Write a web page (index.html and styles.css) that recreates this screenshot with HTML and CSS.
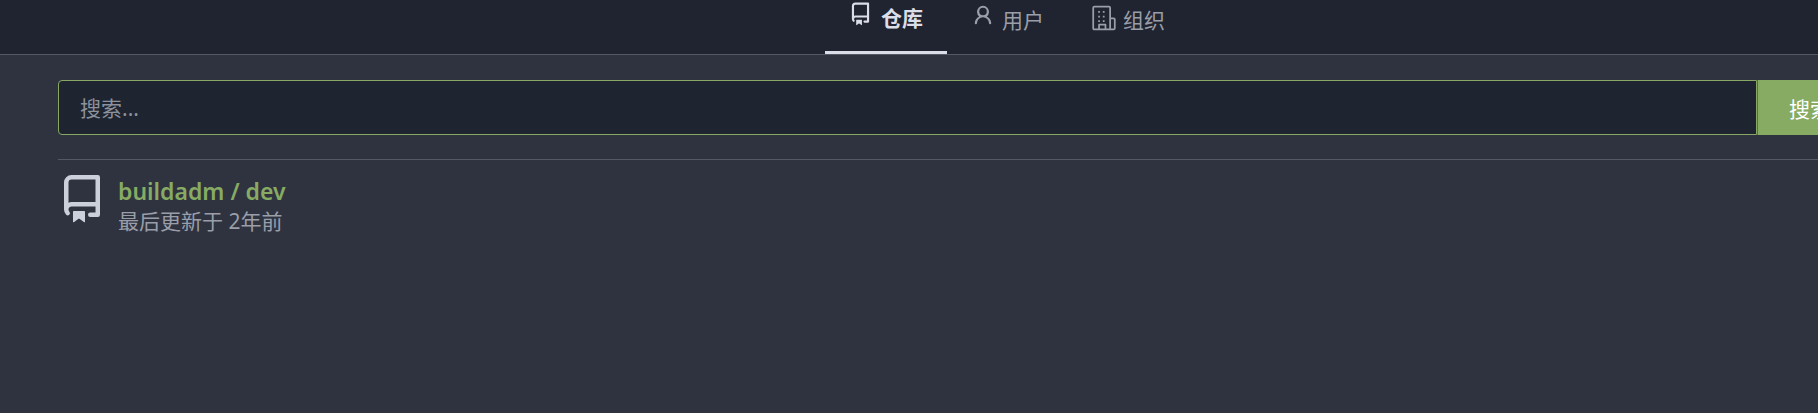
FILE: index.html
```html
<!DOCTYPE html>
<html lang="zh-CN">
<head>
    <meta charset="UTF-8">
    <title>探索</title>
    <link rel="stylesheet" href="styles.css">
</head>
<body>
    <div class="tabs">
        <a class="tab active">
            <svg class="tab-icon" viewBox="0 0 16 16"><path fill-rule="evenodd" d="M2 2.5A2.5 2.5 0 0 1 4.5 0h8.75a.75.75 0 0 1 .75.75v12.5a.75.75 0 0 1-.75.75h-2.5a.75.75 0 0 1 0-1.5h1.75v-2h-8a1 1 0 0 0-.71 1.71.75.75 0 0 1-1.07 1.05A2.5 2.5 0 0 1 2 11.5v-9zm10.5-1h-8a1 1 0 0 0-1 1v6.71A2.5 2.5 0 0 1 4.5 9h8V1.5zM5 12.25a.25.25 0 0 1 .25-.25h3.5a.25.25 0 0 1 .25.25v3.25a.25.25 0 0 1-.4.2l-1.45-1.09a.25.25 0 0 0-.3 0L5.4 15.7a.25.25 0 0 1-.4-.2v-3.25z"/></svg>
            仓库
        </a>
        <a class="tab">
            <svg class="tab-icon" viewBox="0 0 16 16"><path fill-rule="evenodd" d="M10.5 5a2.5 2.5 0 1 1-5 0 2.5 2.5 0 0 1 5 0zm.06 3.28a4 4 0 1 0-5.12 0 5.5 5.5 0 0 0-2.94 4.47.75.75 0 1 0 1.5.1 4 4 0 0 1 8 0 .75.75 0 1 0 1.5-.1 5.5 5.5 0 0 0-2.94-4.47z"/></svg>
            用户
        </a>
        <a class="tab org">
            <svg class="tab-icon wide" viewBox="0 0 24 24"><path fill-rule="evenodd" d="M3.75 1.5A1.75 1.75 0 0 0 2 3.25v17.5c0 .97.78 1.75 1.75 1.75h16.5A1.75 1.75 0 0 0 22 20.75v-7.5A1.75 1.75 0 0 0 20.25 11.5H18V3.25a1.75 1.75 0 0 0-1.75-1.75h-12.5zM16.5 3.25v17.75H14v-3.25a.75.75 0 0 0-.75-.75h-5.5a.75.75 0 0 0-.75.75V21H3.75a.25.25 0 0 1-.25-.25V3.25A.25.25 0 0 1 3.75 3h12.5a.25.25 0 0 1 .25.25zM18 13h2.25a.25.25 0 0 1 .25.25v7.5a.25.25 0 0 1-.25.25H18v-8zM8.5 21v-2.5h4V21h-4zM7 6h1.5v1.5H7V6zm4 0h1.5v1.5H11V6zM7 10h1.5v1.5H7V10zm4 0h1.5v1.5H11V10zM7 14h1.5v1.5H7V14zm4 0h1.5v1.5H11V14z"/></svg>
            组织
        </a>
    </div>

    <div class="content">
        <form class="search">
            <input class="search-input" type="text" placeholder="搜索...">
            <button class="search-btn" type="button">搜索</button>
        </form>
        <hr class="divider">
        <div class="repo">
            <svg class="repo-icon" viewBox="0 0 16 16"><path fill-rule="evenodd" d="M2 2.5A2.5 2.5 0 0 1 4.5 0h8.75a.75.75 0 0 1 .75.75v12.5a.75.75 0 0 1-.75.75h-2.5a.75.75 0 0 1 0-1.5h1.75v-2h-8a1 1 0 0 0-.71 1.71.75.75 0 0 1-1.07 1.05A2.5 2.5 0 0 1 2 11.5v-9zm10.5-1h-8a1 1 0 0 0-1 1v6.71A2.5 2.5 0 0 1 4.5 9h8V1.5zM5 12.25a.25.25 0 0 1 .25-.25h3.5a.25.25 0 0 1 .25.25v3.25a.25.25 0 0 1-.4.2l-1.45-1.09a.25.25 0 0 0-.3 0L5.4 15.7a.25.25 0 0 1-.4-.2v-3.25z"/></svg>
            <div class="repo-info">
                <a class="repo-name">buildadm / dev</a>
                <p class="repo-time">最后更新于 2年前</p>
            </div>
        </div>
    </div>
</body>
</html>
```

FILE: styles.css
```css
html, body {
    height: 100%;
}
body {
    margin: 0;
    overflow: hidden;
    background: #2f3340;
    font-family: "Noto Sans", "Noto Sans CJK SC", sans-serif;
    font-size: 21px;
}
.tabs {
    display: flex;
    height: 54px;
    padding-left: 825px;
    background: #202430;
    border-bottom: 1px solid #555963;
}
.tab {
    display: flex;
    align-items: flex-start;
    gap: 7px;
    height: 54px;
    padding: 4px 24px 0;
    box-sizing: border-box;
    color: #9a9ea9;
    white-space: nowrap;
}
.tab.active {
    width: 122px;
    gap: 9px;
    padding-top: 2px;
    color: #dbdee8;
    font-weight: 700;
    border-bottom: 3px solid #dbdee8;
}
.tab.org {
    padding-left: 22px;
    gap: 5px;
}
.tab-icon {
    width: 24px;
    height: 24px;
    fill: currentColor;
}
.tab-icon.wide {
    width: 28px;
    height: 28px;
}
.content {
    width: 1844px;
    padding: 25px 0 0 58px;
}
.search {
    display: flex;
    height: 55px;
}
.search-input {
    flex: 1;
    padding: 0 21px;
    background: #1e2530;
    border: 1px solid #86a862;
    border-radius: 4px 0 0 4px;
    font: inherit;
    color: #dbdee8;
    outline: none;
}
.search-input::placeholder {
    color: #8c919c;
    opacity: 1;
}
.search-btn {
    width: 145px;
    padding: 0 0 0 31px;
    text-align: left;
    background: #87ab63;
    border: none;
    border-left: 1px solid #5f6470;
    font: inherit;
    color: #fff;
}
.divider {
    height: 1px;
    margin: 24px 0 0;
    background: #555963;
    border: none;
}
.repo {
    display: flex;
    gap: 12px;
    padding-top: 15px;
}
.repo-icon {
    width: 48px;
    height: 48px;
    fill: #ccd0da;
}
.repo-name {
    display: block;
    margin-top: 1px;
    line-height: 30px;
    font-size: 23px;
    font-weight: 600;
    color: #87ab63;
}
.repo-time {
    margin: 1px 0 0;
    line-height: 28px;
    font-size: 21px;
    color: #9a9ea9;
}
```
